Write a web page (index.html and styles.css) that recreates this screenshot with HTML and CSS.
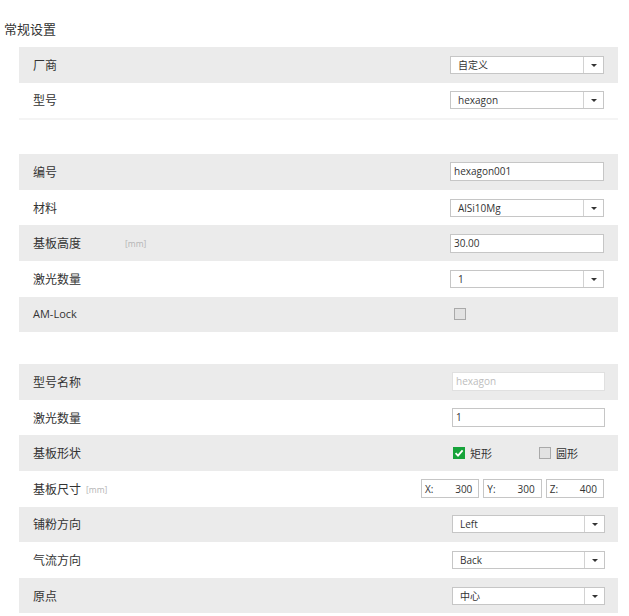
FILE: index.html
```html
<!DOCTYPE html>
<html lang="zh-CN">
<head>
<meta charset="utf-8">
<title>常规设置</title>
<link rel="stylesheet" href="styles.css">
</head>
<body>
<div class="title">常规设置</div>

<div class="section sec-1">
  <div class="row">
    <div class="label">厂商</div>
    <div class="ctrl"><div class="select"><span class="val">自定义</span><span class="arrow"></span></div></div>
  </div>
  <div class="row">
    <div class="label">型号</div>
    <div class="ctrl"><div class="select"><span class="val">hexagon</span><span class="arrow"></span></div></div>
  </div>
</div>

<div class="section sec-2">
  <div class="row">
    <div class="label">编号</div>
    <div class="ctrl"><div class="input">hexagon001</div></div>
  </div>
  <div class="row">
    <div class="label">材料</div>
    <div class="ctrl"><div class="select"><span class="val">AlSi10Mg</span><span class="arrow"></span></div></div>
  </div>
  <div class="row">
    <div class="label label-fixed">基板高度</div><span class="unit">[mm]</span>
    <div class="ctrl"><div class="input">30.00</div></div>
  </div>
  <div class="row">
    <div class="label">激光数量</div>
    <div class="ctrl"><div class="select"><span class="val">1</span><span class="arrow"></span></div></div>
  </div>
  <div class="row">
    <div class="label latin">AM-Lock</div>
    <div class="ctrl"><span class="check"></span></div>
  </div>
</div>

<div class="section sec-3">
  <div class="row">
    <div class="label">型号名称</div>
    <div class="ctrl"><div class="input disabled">hexagon</div></div>
  </div>
  <div class="row">
    <div class="label">激光数量</div>
    <div class="ctrl"><div class="input">1</div></div>
  </div>
  <div class="row">
    <div class="label">基板形状</div>
    <div class="ctrl options">
      <label class="opt"><span class="check on"><svg viewBox="0 0 12 12" width="12" height="12"><path d="M2.6 6.2 L5 8.6 L9.6 3.4" fill="none" stroke="#fff" stroke-width="1.8"/></svg></span><span>矩形</span></label>
      <label class="opt opt-2"><span class="check"></span><span>圆形</span></label>
    </div>
  </div>
  <div class="row">
    <div class="label">基板尺寸</div><span class="unit unit-tight">[mm]</span>
    <div class="ctrl xyz">
      <div class="coord"><span>X:</span><span>300</span></div>
      <div class="coord"><span>Y:</span><span>300</span></div>
      <div class="coord"><span>Z:</span><span>400</span></div>
    </div>
  </div>
  <div class="row">
    <div class="label">铺粉方向</div>
    <div class="ctrl"><div class="select"><span class="val">Left</span><span class="arrow"></span></div></div>
  </div>
  <div class="row">
    <div class="label">气流方向</div>
    <div class="ctrl"><div class="select"><span class="val">Back</span><span class="arrow"></span></div></div>
  </div>
  <div class="row">
    <div class="label">原点</div>
    <div class="ctrl"><div class="select"><span class="val">中心</span><span class="arrow"></span></div></div>
  </div>
</div>
</body>
</html>
```

FILE: styles.css
```css
* { box-sizing: border-box; }

html, body {
  margin: 0;
  padding: 0;
  background: #ffffff;
}

body {
  font-family: "Open Sans", "Noto Sans CJK SC", sans-serif;
  color: #333333;
  width: 629px;
}

.title {
  font-family: "Noto Sans CJK SC", sans-serif;
  font-size: 13px;
  line-height: 18px;
  padding: 20px 0 0 4px;
  height: 47px;
  color: #333;
}

.section {
  margin-left: 19px;
  width: 599px;
}

.sec-1 {
  border-bottom: 2px solid #f4f4f4;
}

.sec-2 {
  margin-top: 34px;
}

.sec-3 {
  margin-top: 32px;
}

.row {
  height: 35.6px;
  display: flex;
  align-items: center;
  padding-left: 14px;
  padding-right: 14px;
}

.row:nth-child(odd) {
  background: #ebebeb;
}

.label {
  font-family: "Noto Sans CJK SC", sans-serif;
  font-size: 12px;
  line-height: 16px;
  color: #333;
}

.label.latin {
  font-family: "Open Sans", sans-serif;
  font-size: 11px;
}

.label-fixed {
  width: 92px;
}

.unit {
  font-family: "Open Sans", sans-serif;
  font-size: 8.5px;
  color: #b4b4b4;
  margin-top: 1px;
}

.unit-tight {
  margin-left: 5px;
}

.ctrl {
  margin-left: auto;
  width: 154px;
  display: flex;
  align-items: center;
}

.sec-3 .row {
  padding-right: 13px;
}

.sec-3 .ctrl {
  width: 153px;
}

.select {
  width: 100%;
  height: 18px;
  border: 1px solid #c6c6c6;
  background: #fff;
  display: flex;
  align-items: center;
  font-size: 10px;
  color: #333;
}

.select .val {
  flex: 1;
  padding-left: 7px;
  line-height: 16px;
}

.select .arrow {
  width: 20px;
  height: 16px;
  border-left: 1px solid #d2d2d2;
  position: relative;
}

.select .arrow::after {
  content: "";
  position: absolute;
  left: 7px;
  top: 7px;
  border-left: 3px solid transparent;
  border-right: 3px solid transparent;
  border-top: 3px solid #333;
}

.input {
  width: 100%;
  height: 19px;
  border: 1px solid #c6c6c6;
  background: #fff;
  font-size: 10px;
  line-height: 17px;
  padding-left: 3px;
  color: #333;
}

.input.disabled {
  border-color: #e0e0e0;
  color: #bdbdbd;
}

.check {
  display: inline-block;
  width: 12px;
  height: 12px;
  border: 1px solid #a9a9a9;
  background: #e2e2e2;
  margin-left: 4px;
}

.check.on {
  background: #16a33a;
  border-color: #16a33a;
  position: relative;
}

.check.on svg {
  position: absolute;
  left: -1px;
  top: -1px;
}

.options {
  font-family: "Noto Sans CJK SC", sans-serif;
  font-size: 11px;
}

.opt {
  display: flex;
  align-items: center;
  gap: 5px;
  color: #333;
}

.opt .check {
  margin-left: 1px;
  width: 12px;
  height: 12px;
}

.opt-2 {
  margin-left: 46px;
}

.xyz {
  width: 183px;
  gap: 4px;
}

.sec-3 .xyz {
  width: 184px;
  padding-right: 1px;
}

.coord {
  flex: 1;
  height: 19px;
  border: 1px solid #c6c6c6;
  background: #fff;
  display: flex;
  justify-content: space-between;
  align-items: center;
  font-size: 10px;
  padding: 0 6px 0 3px;
  color: #333;
}
```
